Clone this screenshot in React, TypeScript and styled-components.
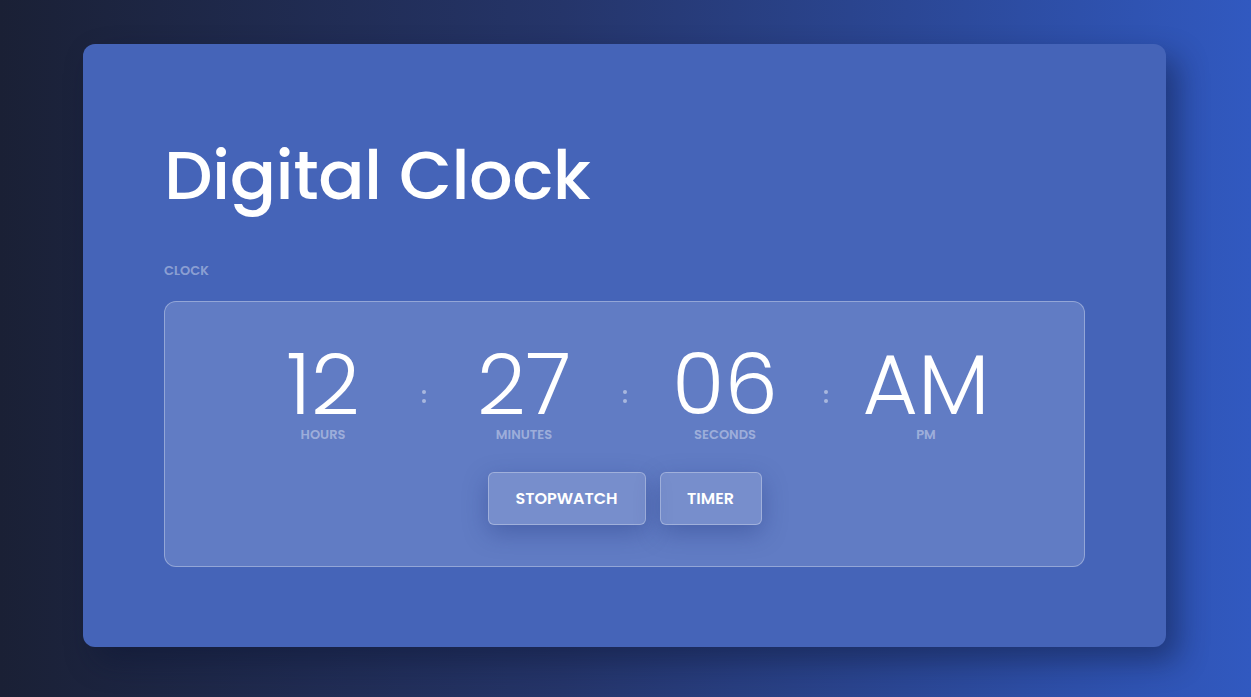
import React from "react";
import styled, { createGlobalStyle } from "styled-components";

const Global = createGlobalStyle`
  html, body { margin: 0; padding: 0; }
  body {
    font-family: Poppins, "Open Sans", "Noto Sans", sans-serif;
    background: linear-gradient(90deg, #1a2035 0%, #25356a 45%, #3159c0 100%);
    min-height: 697px;
  }
`;

const Page = styled.div`
  box-sizing: border-box;
  height: 697px;
  padding: 44px 85px 50px 83px;
`;

const Card = styled.div`
  box-sizing: border-box;
  width: 1083px;
  height: 603px;
  background: #4564b8;
  border-radius: 12px;
  padding: 97px 81px 80px 81px;
  box-shadow: 12px 14px 30px rgba(10, 20, 50, 0.45);
`;

const Title = styled.h1`
  margin: 0;
  font-size: 68.5px;
  font-weight: 500;
  line-height: 1;
  color: #ffffff;
  letter-spacing: -0.5px;
`;

const SectionLabel = styled.div`
  margin-top: 54px;
  font-size: 13px;
  font-weight: 600;
  color: rgba(255, 255, 255, 0.4);
  line-height: 1;
`;

const Panel = styled.div`
  box-sizing: border-box;
  margin-top: 24px;
  width: 921px;
  height: 266px;
  background: #617cc4;
  border: 1px solid rgba(255, 255, 255, 0.32);
  border-radius: 12px;
  display: flex;
  flex-direction: column;
  align-items: center;
  padding-top: 48px;
`;

const Row = styled.div`
  display: flex;
  align-items: flex-start;
  justify-content: center;
`;

const Unit = styled.div`
  width: 170px;
  display: flex;
  flex-direction: column;
  align-items: center;
`;

const Value = styled.div`
  font-size: 85px;
  font-weight: 300;
  line-height: 70px;
  color: #ffffff;
`;

const UnitLabel = styled.div`
  font-size: 13px;
  font-weight: 600;
  line-height: 20px;
  color: rgba(255, 255, 255, 0.4);
  margin-top: 5px;
`;

const Colon = styled.div`
  box-sizing: border-box;
  width: 31px;
  height: 70px;
  padding-top: 23px;
  display: flex;
  flex-direction: column;
  align-items: center;
  justify-content: center;
  gap: 5px;
`;

const Dot = styled.span`
  width: 4px;
  height: 4px;
  border-radius: 50%;
  background: rgba(255, 255, 255, 0.45);
`;

const Buttons = styled.div`
  display: flex;
  gap: 14px;
  margin-top: 27px;
`;

const Button = styled.button<{ $w: number }>`
  box-sizing: border-box;
  width: ${(p) => p.$w}px;
  height: 53px;
  border-radius: 6px;
  border: 1px solid rgba(255, 255, 255, 0.3);
  background: rgba(255, 255, 255, 0.14);
  color: #ffffff;
  font-family: inherit;
  font-size: 16px;
  font-weight: 600;
  box-shadow: 0 8px 24px rgba(30, 50, 120, 0.35);
  cursor: pointer;
`;

const units = [
  { v: "12", l: "HOURS" },
  { v: "27", l: "MINUTES" },
  { v: "06", l: "SECONDS" },
  { v: "AM", l: "PM" },
];

export default function App() {
  return (
    <>
      <Global />
      <Page>
        <Card>
          <Title>Digital Clock</Title>
          <SectionLabel>CLOCK</SectionLabel>
          <Panel>
            <Row>
              {units.map((u, i) => (
                <React.Fragment key={u.l}>
                  {i > 0 && (
                    <Colon>
                      <Dot />
                      <Dot />
                    </Colon>
                  )}
                  <Unit>
                    <Value>{u.v}</Value>
                    <UnitLabel>{u.l}</UnitLabel>
                  </Unit>
                </React.Fragment>
              ))}
            </Row>
            <Buttons>
              <Button $w={158}>STOPWATCH</Button>
              <Button $w={102}>TIMER</Button>
            </Buttons>
          </Panel>
        </Card>
      </Page>
    </>
  );
}
